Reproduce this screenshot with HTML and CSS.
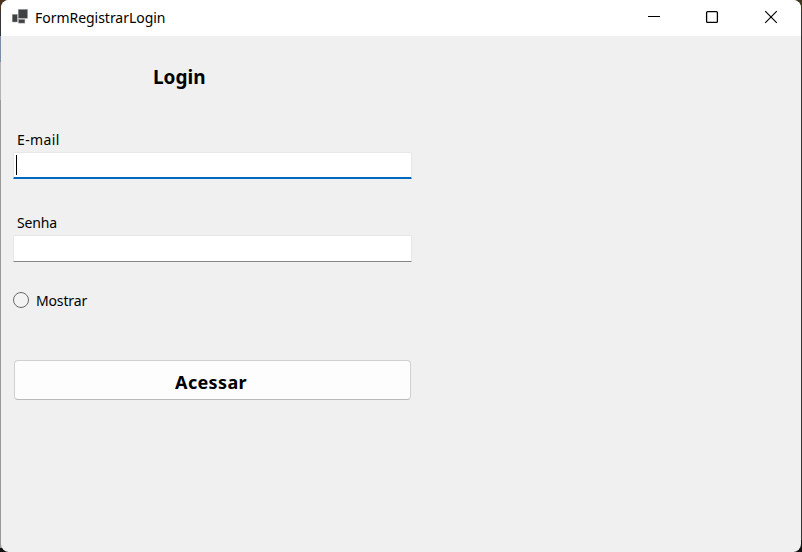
FILE: index.html
```
<!DOCTYPE html>
<html lang="pt-BR">
<head>
<meta charset="utf-8">
<title>FormRegistrarLogin</title>
<link rel="stylesheet" href="styles.css">
</head>
<body>
<div class="window">
  <header class="titlebar">
    <svg class="app-icon" width="17" height="16" viewBox="0 0 17 16">
      <g fill="#404142" stroke="#a9a9a9" stroke-width=".5">
        <rect x="7.2" y=".3" width="9.4" height="9"/>
        <rect x="1.2" y="5.3" width="5.2" height="7.7"/>
        <rect x="7.5" y="10.3" width="6.4" height="3.8"/>
      </g>
    </svg>
    <span class="title">FormRegistrarLogin</span>
    <div class="controls">
      <svg width="58" height="36" viewBox="0 0 58 36"><path d="M22 16.5h12" stroke="#000"/></svg>
      <svg width="58" height="36" viewBox="0 0 58 36"><rect x="22.6" y="11.6" width="10.8" height="10.8" rx="1" fill="none" stroke="#000" stroke-width="1.3"/></svg>
      <svg width="58" height="36" viewBox="0 0 58 36"><path d="M23.2 11.2l11.6 11.6M34.8 11.2l-11.6 11.6" stroke="#000" stroke-width="1.15"/></svg>
    </div>
  </header>
  <main class="form">
    <h1 class="heading">Login</h1>
    <div class="label email-label">E-mail</div>
    <div class="field focused"><i class="caret"></i></div>
    <div class="label password-label">Senha</div>
    <div class="field"></div>
    <div class="option"><i class="radio"></i><span>Mostrar</span></div>
    <button class="submit">Acessar</button>
  </main>
</div>
</body>
</html>
```
FILE: styles.css
```
* { box-sizing: border-box; }
html, body { margin: 0; height: 100%; }
body {
  overflow: hidden;
  padding: 0 1px 0;
  background:
    linear-gradient(#49301f 0 12px, #34353a 12px 36px, #7b8ca8 36px 62px, #b3b3b3 62px 100px, #999 100px 548px, #111 548px) left / 8px 100% no-repeat,
    linear-gradient(#40371f 0 12px, #333 12px 540px, #111 540px) right / 8px 100% no-repeat;
  font-family: "Noto Sans", "Open Sans", sans-serif;
  font-size: 14px;
  color: #000;
}
.window {
  height: 552px;
  background: #f0f0f0;
  border-radius: 8px;
  overflow: hidden;
}
.titlebar {
  display: flex;
  height: 36px;
  background: #fff;
  padding-left: 10px;
}
.app-icon { margin-top: 9px; flex: none; }
.title { margin-left: 7px; line-height: 35px; letter-spacing: -.03px; }
.controls { display: flex; margin-left: auto; margin-right: 1px; }
.form {
  display: flex;
  flex-direction: column;
  width: 411px;
  padding-left: 12px;
}
.heading {
  margin: 27px 0 0 140px;
  height: 28px;
  line-height: 28px;
  font-size: 19px;
  font-weight: 700;
}
.label { height: 22px; line-height: 22px; margin-left: 4px; }
.email-label { margin-top: 38px; letter-spacing: .4px; }
.password-label { margin-top: 33px; letter-spacing: -.15px; }
.field {
  height: 27px;
  margin-top: 1px;
  background: #fff;
  border: 1px solid #e7e7e7;
  border-bottom-color: #868686;
  border-radius: 1px;
}
.focused {
  border-bottom: 2px solid #0067c0;
  padding: 2px 0 0 2px;
}
.caret { display: block; width: 1px; height: 20px; background: #000; }
.option {
  display: flex;
  align-items: center;
  height: 22px;
  margin-top: 27px;
  letter-spacing: -.15px;
}
.radio {
  width: 16px;
  height: 16px;
  margin-right: 7px;
  border: 1px solid #696969;
  border-radius: 50%;
  background: #f3f3f3;
}
.submit {
  height: 40px;
  margin: 49px 1px 0;
  padding: 3px 3px 0 0;
  border: 1px solid #d0d0d0;
  border-bottom-color: #bababa;
  border-radius: 4px;
  background: #fdfdfd;
  font: 700 18px "Noto Sans", "Open Sans", sans-serif;
  letter-spacing: .35px;
  color: #000;
}
```
